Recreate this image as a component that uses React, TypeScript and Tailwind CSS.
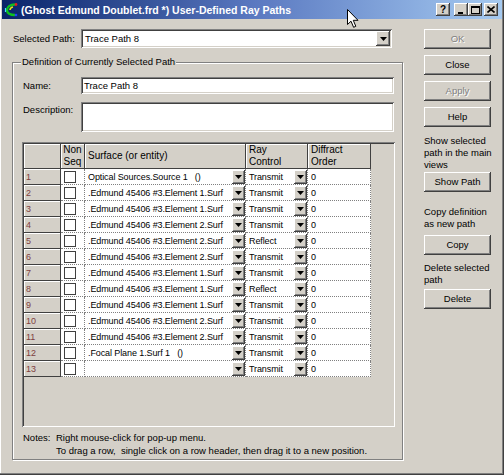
import React from "react";

// classic win32 bevels
const raised =
  "shadow-[inset_-1px_-1px_0_#404040,inset_1px_1px_0_#ffffff,inset_-2px_-2px_0_#808080,inset_2px_2px_0_#d4d0c8]";
const sunken =
  "shadow-[inset_1px_1px_0_#808080,inset_-1px_-1px_0_#ffffff,inset_2px_2px_0_#404040,inset_-2px_-2px_0_#d4d0c8]";

type Row = { surface: string; ray: string };

const rows: Row[] = [
  { surface: "Optical Sources.Source 1   ()", ray: "Transmit" },
  { surface: ".Edmund 45406 #3.Element 1.Surf", ray: "Transmit" },
  { surface: ".Edmund 45406 #3.Element 1.Surf", ray: "Transmit" },
  { surface: ".Edmund 45406 #3.Element 2.Surf", ray: "Transmit" },
  { surface: ".Edmund 45406 #3.Element 2.Surf", ray: "Reflect" },
  { surface: ".Edmund 45406 #3.Element 2.Surf", ray: "Transmit" },
  { surface: ".Edmund 45406 #3.Element 1.Surf", ray: "Transmit" },
  { surface: ".Edmund 45406 #3.Element 1.Surf", ray: "Reflect" },
  { surface: ".Edmund 45406 #3.Element 1.Surf", ray: "Transmit" },
  { surface: ".Edmund 45406 #3.Element 2.Surf", ray: "Transmit" },
  { surface: ".Edmund 45406 #3.Element 2.Surf", ray: "Transmit" },
  { surface: ".Focal Plane 1.Surf 1   ()", ray: "Transmit" },
  { surface: "", ray: "Transmit" },
];

function Tri() {
  return (
    <svg width="7" height="4" viewBox="0 0 7 4">
      <path d="M0 0h7L3.5 4z" fill="#000" />
    </svg>
  );
}

function DropBtn({ className = "" }: { className?: string }) {
  return (
    <div
      className={`flex shrink-0 items-center justify-center bg-[#d4d0c8] ${raised} ${className}`}
    >
      <Tri />
    </div>
  );
}

function Button({
  label,
  disabled,
  className = "",
}: {
  label: string;
  disabled?: boolean;
  className?: string;
}) {
  return (
    <div
      className={`flex h-[20px] w-[67px] items-center justify-center bg-[#d4d0c8] ${raised} ${
        disabled ? "text-[#808080] [text-shadow:1px_1px_0_#ffffff]" : "text-black"
      } ${className}`}
    >
      {label}
    </div>
  );
}

function TitleBtn({
  children,
  className = "",
}: {
  children: React.ReactNode;
  className?: string;
}) {
  return (
    <div
      className={`flex h-[13px] w-[14px] items-center justify-center bg-[#d4d0c8] ${raised} ${className}`}
    >
      {children}
    </div>
  );
}

function AppIcon() {
  return (
    <svg width="14" height="15" viewBox="0 0 14 15">
      <path d="M11 2.5C6 2.5 3 5 3 8s3 5 8 5" fill="none" stroke="#10c020" strokeWidth="2.4" />
      <path d="M9 5C7 5.5 6 6.5 6 8" fill="none" stroke="#e8e020" strokeWidth="1.6" />
      <circle cx="12" cy="2.5" r="1.4" fill="#e02020" />
      <circle cx="12" cy="13" r="1.3" fill="#2040ff" />
      <path d="M1.5 6v4" stroke="#40e0ff" strokeWidth="1.2" />
    </svg>
  );
}

export default function App() {
  return (
    <div className="relative h-[475px] w-[504px] overflow-hidden bg-[#d4d0c8] font-['Liberation_Sans',Arial,sans-serif] text-[9.5px] leading-[12px] text-black shadow-[inset_-1px_-1px_0_#404040,inset_-2px_-2px_0_#808080,inset_1px_0_0_#ffffff]">
      {/* title bar */}
      <div className="mx-[2px] flex h-[19px] items-center bg-gradient-to-r from-[#0a246a] via-[#5a78c0] to-[#a6caf0] pl-[2px] pr-[4px]">
        <AppIcon />
        <span className="ml-[3px] text-[10.5px] font-bold whitespace-nowrap text-white">
          (Ghost Edmund Doublet.frd *) User-Defined Ray Paths
        </span>
        <div className="ml-auto flex items-center">
          <TitleBtn>
            <span className="text-[10px] leading-none font-bold">?</span>
          </TitleBtn>
          <TitleBtn className="ml-[4px]">
            <svg width="8" height="8" viewBox="0 0 8 8">
              <rect x="1" y="6" width="5" height="2" fill="#000" />
            </svg>
          </TitleBtn>
          <TitleBtn>
            <svg width="9" height="8" viewBox="0 0 9 8">
              <rect x="0.5" y="0.5" width="8" height="7" fill="none" stroke="#000" />
              <rect x="0" y="0" width="9" height="2" fill="#000" />
            </svg>
          </TitleBtn>
          <TitleBtn className="ml-[2px]">
            <svg width="8" height="7" viewBox="0 0 8 7">
              <path d="M0.5 0.5l7 6M7.5 0.5l-7 6" stroke="#000" strokeWidth="1.6" />
            </svg>
          </TitleBtn>
        </div>
      </div>

      {/* body */}
      <div className="flex pl-[12px] pt-[10px]">
        <div className="w-[392px]">
          <div className="flex h-[19px] items-center">
            <div className="w-[69px] pl-[1px]">Selected Path:</div>
            <div className={`flex h-[19px] w-[311px] items-center bg-white p-[2px] ${sunken}`}>
              <div className="flex-1 pl-[2px]">Trace Path 8</div>
              <DropBtn className="h-[15px] w-[14px]" />
            </div>
          </div>

          <div className="relative mt-[14px] h-[398px] w-[391px] border border-[#808080] shadow-[inset_1px_1px_0_#ffffff,1px_1px_0_#ffffff]">
            <div className="absolute -top-[7px] left-[8px] bg-[#d4d0c8] px-[1px]">
              Definition of Currently Selected Path
            </div>
            <div className="pl-[9px] pt-[14px]">
              <div className="flex items-center">
                <div className="w-[59px] pl-[1px]">Name:</div>
                <div className={`flex h-[17px] w-[313px] items-center bg-white pl-[3px] ${sunken}`}>
                  Trace Path 8
                </div>
              </div>
              <div className="mt-[8px] flex">
                <div className="w-[59px] pl-[1px] pt-[2px]">Description:</div>
                <div className={`h-[30px] w-[313px] bg-white ${sunken}`} />
              </div>

              {/* grid */}
              <div className={`mt-[10px] h-[285px] w-[373px] bg-[#d4d0c8] p-[2px] ${sunken}`}>
                <div className="grid w-[347px] grid-cols-[37px_24px_161px_62px_63px] text-[9px] tracking-[-0.1px]">
                  {/* header */}
                  <div className="h-[25px] border-b border-r border-[#404040] shadow-[inset_1px_1px_0_#ffffff]" />
                  <div className="flex h-[25px] flex-col items-center justify-center border-b border-r border-[#404040] text-[10px] tracking-normal shadow-[inset_1px_1px_0_#ffffff]">
                    <span>Non</span>
                    <span>Seq</span>
                  </div>
                  <div className="flex h-[25px] items-center border-b border-r border-[#404040] pl-[3px] text-[10px] tracking-normal shadow-[inset_1px_1px_0_#ffffff]">
                    Surface (or entity)
                  </div>
                  <div className="flex h-[25px] flex-col justify-center border-b border-r border-[#404040] pl-[3px] text-[10px] tracking-normal shadow-[inset_1px_1px_0_#ffffff]">
                    <span>Ray</span>
                    <span>Control</span>
                  </div>
                  <div className="flex h-[25px] flex-col justify-center border-b border-r border-[#404040] pl-[3px] text-[10px] tracking-normal shadow-[inset_1px_1px_0_#ffffff]">
                    <span>Diffract</span>
                    <span>Order</span>
                  </div>

                  {rows.map((r, i) => (
                    <React.Fragment key={i}>
                      <div className="flex h-[16px] items-center border-b border-r border-[#404040] pl-[2px] text-[#7f3f3f] shadow-[inset_1px_1px_0_#ffffff]">
                        {i + 1}
                      </div>
                      <div className="flex h-[16px] items-center border-b border-r border-dotted border-[#808080] bg-white pl-[3px]">
                        <div className="h-[12px] w-[12px] border border-[#404040] bg-white" />
                      </div>
                      <div className="flex h-[16px] items-center border-b border-r border-dotted border-[#808080] bg-white">
                        <div className="flex-1 overflow-hidden whitespace-pre pl-[3px]">{r.surface}</div>
                        <DropBtn className="h-[14px] w-[13px]" />
                      </div>
                      <div className="flex h-[16px] items-center border-b border-r border-dotted border-[#808080] bg-white">
                        <div className="flex-1 pl-[3px]">{r.ray}</div>
                        <DropBtn className="h-[14px] w-[13px]" />
                      </div>
                      <div className="flex h-[16px] items-center border-b border-r border-dotted border-[#808080] bg-white pl-[3px]">
                        0
                      </div>
                    </React.Fragment>
                  ))}
                </div>
              </div>

              <div className="mt-[4px] flex leading-[13px]">
                <div className="w-[34px] pl-[1px]">Notes:</div>
                <div>
                  <div>Right mouse-click for pop-up menu.</div>
                  <div className="whitespace-pre">
                    To drag a row,  single click on a row header, then drag it to a new position.
                  </div>
                </div>
              </div>
            </div>
          </div>
        </div>

        {/* right buttons */}
        <div className="ml-[20px] w-[67px] whitespace-nowrap">
          <Button label="OK" disabled />
          <Button label="Close" className="mt-[6px]" />
          <Button label="Apply" disabled className="mt-[6px]" />
          <Button label="Help" className="mt-[6px]" />
          <div className="mt-[8px]">
            Show selected
            <br />
            path in the main
            <br />
            views
          </div>
          <Button label="Show Path" className="mt-[1px]" />
          <div className="mt-[14px]">
            Copy definition
            <br />
            as new path
          </div>
          <Button label="Copy" className="mt-[5px]" />
          <div className="mt-[7px]">
            Delete selected
            <br />
            path
          </div>
          <Button label="Delete" className="mt-[3px]" />
        </div>
      </div>

      {/* mouse pointer */}
      <svg
        className="absolute left-[347px] top-[9px]"
        width="13"
        height="20"
        viewBox="0 0 13 20"
      >
        <path
          d="M0.5 0.5V15.5L4 12.2L6.6 18.3L8.8 17.3L6.3 11.3H11Z"
          fill="#fff"
          stroke="#000"
          strokeLinejoin="round"
        />
      </svg>
    </div>
  );
}
